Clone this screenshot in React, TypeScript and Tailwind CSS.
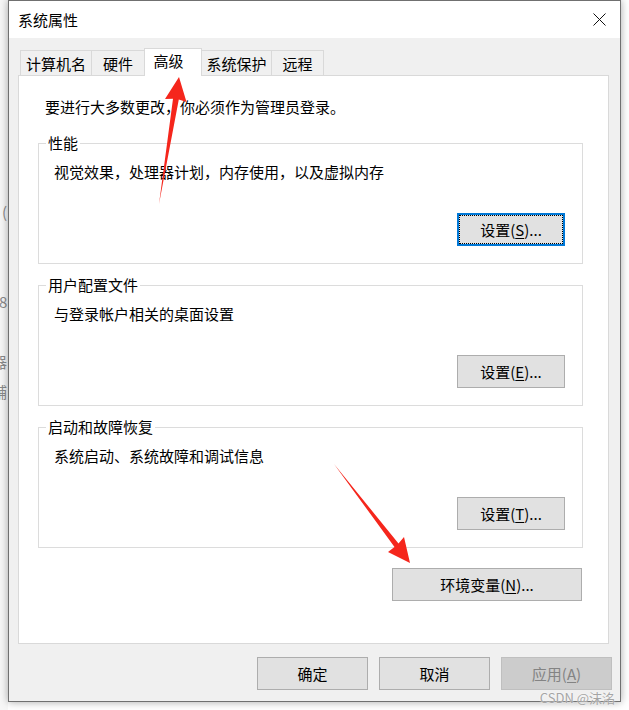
import React from "react";

const font = "font-['Noto_Sans_CJK_SC','Microsoft_YaHei',sans-serif]";

const Mnemonic = ({ label, k }: { label: string; k: string }) => (
  <>
    {label}(<span className="underline underline-offset-2">{k}</span>)
  </>
);

const WinButton = ({
  children,
  w,
  focused = false,
  disabled = false,
}: {
  children: React.ReactNode;
  w: string;
  focused?: boolean;
  disabled?: boolean;
}) => {
  if (focused) {
    return (
      <button className={`${w} h-[33px] bg-[#e1e1e1] border-2 border-[#0078d7] outline-1 outline-dotted outline-black outline-offset-[-3px] text-[15px] leading-none text-black flex items-center justify-center`}>
        {children}
      </button>
    );
  }
  return (
    <button
      className={
        disabled
          ? `${w} h-[33px] bg-[#cccccc] border border-[#bfbfbf] text-[15px] leading-none text-[#838383] flex items-center justify-center`
          : `${w} h-[33px] bg-[#e1e1e1] border border-[#adadad] text-[15px] leading-none text-black flex items-center justify-center`
      }
    >
      {children}
    </button>
  );
};

const Group = ({
  title,
  desc,
  button,
  className = "",
}: {
  title: string;
  desc: string;
  button: React.ReactNode;
  className?: string;
}) => (
  <div className={`relative w-[545px] h-[121px] border border-[#dcdcdc] ml-[19px] flex flex-col ${className}`}>
    <span className="absolute left-[7px] -top-[11px] bg-white px-[2px] text-[15px] leading-[20px]">{title}</span>
    <p className="pl-[15px] pt-[18px] text-[15px] leading-[20px]">{desc}</p>
    <div className="flex justify-end pr-[17px] mt-[31px]">{button}</div>
  </div>
);

const tabs = [
  { name: "计算机名", cls: "w-[71px] border-l" },
  { name: "硬件", cls: "w-[53px] border-l" },
  { name: "高级", cls: "w-[58px] border-x bg-white h-[28px] -mb-px relative z-10 pb-[4px] pr-[9px]", active: true },
  { name: "系统保护", cls: "w-[69px]" },
  { name: "远程", cls: "w-[53px] border-l border-r" },
];

export default function App() {
  return (
    <div className={`relative w-[629px] h-[710px] bg-white overflow-hidden flex ${font} text-black`}>
      {/* desktop behind the dialog */}
      <div className="w-2 shrink-0 overflow-hidden flex flex-col text-[15px] text-[#8a8a8a] leading-[20px] bg-[#f7f7f7]">
        <span className="mt-[202px] ml-[2px]">(</span>
        <span className="mt-[70px] -ml-[1px]">8</span>
        <span className="mt-[40px] -ml-[8px]">器</span>
        <span className="mt-[10px] -ml-[8px]">辅</span>
      </div>

      {/* dialog window */}
      <div className="w-[613px] h-[702px] shrink-0 border border-[#707070] bg-[#f0f0f0] flex flex-col shadow-[0_0_8px_rgba(0,0,0,0.35)]">
        <div className="h-[37px] bg-white flex items-center justify-between pl-[9px] pr-[14px]">
          <span className="text-[15px] leading-none">系统属性</span>
          <svg width="13" height="13" viewBox="0 0 13 13">
            <path d="M0.5 0.5 L12.5 12.5 M12.5 0.5 L0.5 12.5" stroke="#111" strokeWidth="1" />
          </svg>
        </div>

        <div className="flex-1 flex flex-col pl-[9px] pr-[11px] pt-[10px]">
          <div className="flex items-end pl-[2px]">
            {tabs.map((t) => (
              <div
                key={t.name}
                className={`${t.cls} ${t.active ? "" : "h-[25px] bg-[#f0f0f0]"} border-t border-[#d9d9d9] flex items-center justify-center text-[15px] leading-none`}
              >
                {t.name}
              </div>
            ))}
          </div>

          <div className="h-[569px] bg-white border border-[#d9d9d9] flex flex-col">
            <p className="mt-[21px] ml-[26px] text-[15px] leading-[20px]">要进行大多数更改，你必须作为管理员登录。</p>

            <Group
              className="mt-[26px]"
              title="性能"
              desc="视觉效果，处理器计划，内存使用，以及虚拟内存"
              button={
                <WinButton w="w-[108px]" focused>
                  <Mnemonic label="设置" k="S" />...
                </WinButton>
              }
            />
            <Group
              className="mt-[21px]"
              title="用户配置文件"
              desc="与登录帐户相关的桌面设置"
              button={
                <WinButton w="w-[108px]">
                  <Mnemonic label="设置" k="E" />...
                </WinButton>
              }
            />
            <Group
              className="mt-[21px]"
              title="启动和故障恢复"
              desc="系统启动、系统故障和调试信息"
              button={
                <WinButton w="w-[108px]">
                  <Mnemonic label="设置" k="T" />...
                </WinButton>
              }
            />

            <div className="flex justify-end pr-[26px] mt-[20px]">
              <WinButton w="w-[190px]">
                <Mnemonic label="环境变量" k="N" />...
              </WinButton>
            </div>
          </div>

          <div className="flex justify-end gap-[11px] mt-[13px] -mr-[3px]">
            <WinButton w="w-[111px]">确定</WinButton>
            <WinButton w="w-[111px]">取消</WinButton>
            <WinButton w="w-[111px]" disabled>
              <Mnemonic label="应用" k="A" />
            </WinButton>
          </div>
        </div>
      </div>

      {/* annotation arrows */}
      <svg className="absolute inset-0 pointer-events-none" width="629" height="710" viewBox="0 0 629 710">
        <polygon
          points="179,77 186.5,102 178.8,99.5 159,204 173,98.8 165,99"
          fill="#f5261c"
        />
        <polygon
          points="410,563 388,552 394.5,547 334,464 398.5,543.5 404,537"
          fill="#f5261c"
        />
      </svg>

      <span className="absolute right-[14px] bottom-[6px] text-[13px] leading-none text-[#a5a5a5] [text-shadow:0_0_2px_#fff]">
        CSDN @沫洺
      </span>
    </div>
  );
}
